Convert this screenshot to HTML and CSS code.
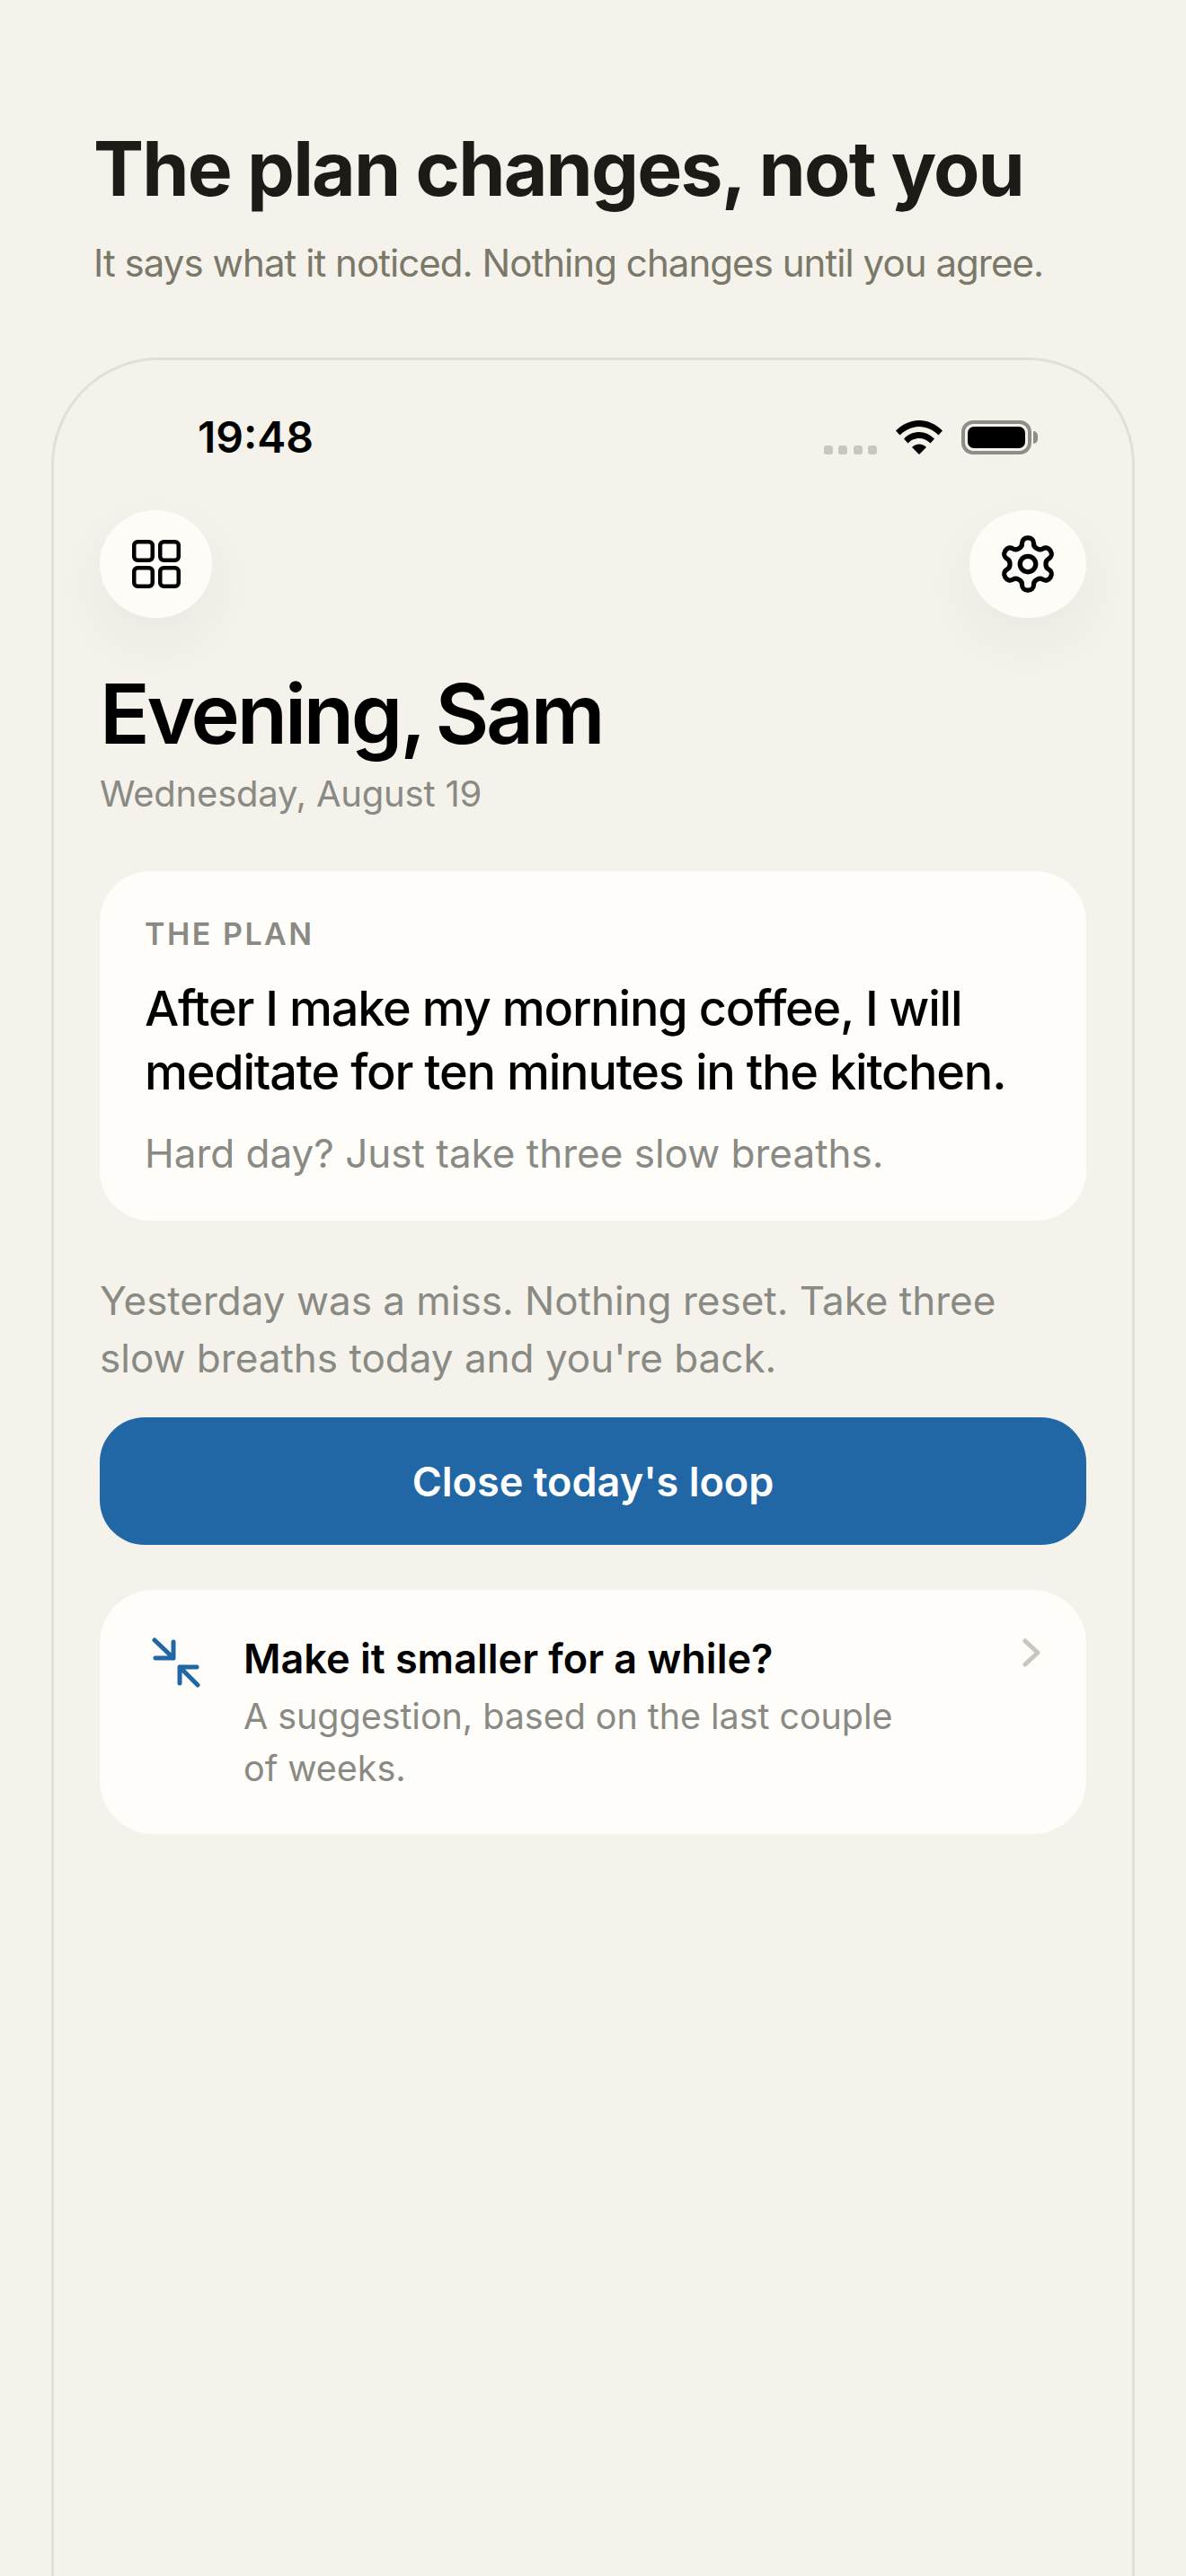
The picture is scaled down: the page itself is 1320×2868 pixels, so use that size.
FILE: index.html
```html
<!DOCTYPE html>
<html lang="en">
<head>
<meta charset="UTF-8" />
<title>The plan changes, not you</title>
<link rel="stylesheet" href="styles.css">
</head>
<body>

<header class="intro">
  <h1>The plan changes, not you</h1>
  <p>It says what it noticed. Nothing changes until you agree.</p>
</header>

<div class="phone">
  <!-- status bar -->
  <div class="status">
    <span class="time">19:48</span>
    <div class="status-icons">
      <span class="dots"><i></i><i></i><i></i><i></i></span>
      <svg class="wifi" width="52" height="38" viewBox="0 0 52 38">
        <path d="M0 11.500C7 4.500 16 0 26 0s19 4.500 26 11.500l-4.500 5C41.500 10.500 34 7 26 7S10.500 10.500 4.500 16.500z"/>
        <path d="M9 20.500C13.500 16 19.500 13 26 13s12.500 3 17 7.500l-4.500 5C35 22 30.800 20 26 20s-9 2-12.500 5.500z"/>
        <path d="M18 30c2-2 5-3.500 8-3.500s6 1.500 8 3.500l-8 8z"/>
      </svg>
      <span class="battery"><b></b></span>
    </div>
  </div>

  <div class="toolbar">
    <button class="round round-grid">
      <svg width="54" height="54" viewBox="0 0 54 54" fill="none" stroke="#000" stroke-width="4.500">
        <rect x="2.250" y="2.250" width="20.500" height="20.500" rx="4"/>
        <rect x="31.250" y="2.250" width="20.500" height="20.500" rx="4"/>
        <rect x="2.250" y="31.250" width="20.500" height="20.500" rx="4"/>
        <rect x="31.250" y="31.250" width="20.500" height="20.500" rx="4"/>
      </svg>
    </button>
    <button class="round round-gear">
      <svg width="70" height="70" viewBox="0 0 24 24" fill="none" stroke="#000" stroke-width="1.800" stroke-linecap="round" stroke-linejoin="round">
        <path d="M12.220 2h-.44a2 2 0 0 0-2 2v.18a2 2 0 0 1-1 1.730l-.43.25a2 2 0 0 1-2 0l-.15-.08a2 2 0 0 0-2.730.73l-.22.38a2 2 0 0 0 .73 2.730l.15.1a2 2 0 0 1 1 1.720v.51a2 2 0 0 1-1 1.740l-.15.09a2 2 0 0 0-.73 2.730l.22.38a2 2 0 0 0 2.730.73l.15-.08a2 2 0 0 1 2 0l.43.25a2 2 0 0 1 1 1.730V20a2 2 0 0 0 2 2h.44a2 2 0 0 0 2-2v-.18a2 2 0 0 1 1-1.730l.43-.25a2 2 0 0 1 2 0l.15.08a2 2 0 0 0 2.730-.73l.22-.39a2 2 0 0 0-.73-2.730l-.15-.08a2 2 0 0 1-1-1.740v-.5a2 2 0 0 1 1-1.740l.15-.09a2 2 0 0 0 .73-2.730l-.22-.38a2 2 0 0 0-2.730-.73l-.15.08a2 2 0 0 1-2 0l-.43-.25a2 2 0 0 1-1-1.730V4a2 2 0 0 0-2-2z"/>
        <circle cx="12" cy="12" r="3"/>
      </svg>
    </button>
  </div>

  <h2 class="greeting">Evening, Sam</h2>
  <div class="date">Wednesday, August 19</div>

  <section class="card plan">
    <div class="plan-label">THE PLAN</div>
    <div class="plan-text">After I make my morning coffee, I will meditate for ten minutes in the kitchen.</div>
    <div class="plan-hint">Hard day? Just take three slow breaths.</div>
  </section>

  <p class="note">Yesterday was a miss. Nothing reset. Take three slow breaths today and you're back.</p>

  <button class="primary">Close today's loop</button>

  <section class="card suggest">
    <svg class="suggest-icon" width="56" height="56" viewBox="0 0 56 56" fill="none" stroke="#2167a6" stroke-width="5" stroke-linecap="round" stroke-linejoin="round">
      <path d="M4 3l21 20M5 23h20V5"/>
      <path d="M52 53L32 33M51 33H32v18"/>
    </svg>
    <div class="suggest-body">
      <div class="suggest-title">Make it smaller for a while?</div>
      <div class="suggest-sub">A suggestion, based on the last couple of weeks.</div>
    </div>
    <svg class="chevron" width="20" height="32" viewBox="0 0 20 32" fill="none" stroke="#c8c6c0" stroke-width="5" stroke-linecap="round" stroke-linejoin="round">
      <path d="M3 3l14 13L3 29"/>
    </svg>
  </section>
</div>

</body>
</html>
```

FILE: styles.css
```css
* {
  box-sizing: border-box;
}
body {
  margin: 0;
  height: 2868px;
  overflow: hidden;
  background: #f4f2eb;
  font-family: Inter, "Liberation Sans", sans-serif;
  color: #000;
  display: flex;
  flex-direction: column;
}
.intro {
  padding: 140px 104px 0;
  height: 398px;
  flex: none;
}
.intro h1 {
  margin: 0;
  font-size: 84px;
  line-height: 96px;
  font-weight: 700;
  letter-spacing: -1.82px;
  color: #1c1b18;
}
.intro p {
  margin: 29px 0 0;
  font-size: 42px;
  line-height: 56px;
  font-weight: 400;
  letter-spacing: -0.95px;
  color: #7a7868;
}

.phone {
  flex: 1;
  margin: 0 57px;
  padding: 0 51px;
  border: 3px solid #e1dfd7;
  border-bottom: none;
  border-radius: 120px 120px 0 0;
}
.status {
  display: flex;
  justify-content: space-between;
  align-items: center;
  height: 100px;
  padding: 0 61px 0 109px;
  margin-top: 36px;
}
.time {
  font-size: 48px;
  font-weight: 600;
  line-height: 58px;
}
.status-icons {
  display: flex;
  align-items: flex-end;
  gap: 21px;
}
.dots {
  display: flex;
  gap: 6.500px;
}
.dots i {
  width: 10px;
  height: 10px;
  border-radius: 3px;
  background: #c8c6c0;
}
.battery {
  position: relative;
  width: 78px;
  height: 38px;
  border: 4px solid #8f8d87;
  border-radius: 13px;
  padding: 3px;
  display: block;
}
.battery b {
  display: block;
  height: 100%;
  background: #000;
  border-radius: 7px;
}
.battery::after {
  content: "";
  position: absolute;
  right: -11px;
  top: 8px;
  width: 5px;
  height: 14px;
  background: #8f8d87;
  border-radius: 0 5px 5px 0;
}

.toolbar {
  display: flex;
  justify-content: space-between;
  margin-top: 31px;
}
.round {
  height: 120px;
  border: none;
  padding: 0;
  border-radius: 50%;
  background: #fefcf6;
  box-shadow: 0 24px 60px rgba(60, 50, 30, 0.05);
  display: flex;
  align-items: center;
  justify-content: center;
}
.round-grid {
  width: 125px;
}
.round-gear {
  width: 130px;
}

.greeting {
  margin: 52px 0 0;
  font-size: 92px;
  line-height: 110px;
  font-weight: 600;
  letter-spacing: -3.2px;
  word-spacing: -5px;
}
.date {
  margin-top: 9px;
  font-size: 40px;
  line-height: 50px;
  letter-spacing: -0.2px;
  color: #8a8a85;
}

.card {
  background: #fefdf9;
  border-radius: 56px;
}
.plan {
  margin-top: 61px;
  height: 389px;
  padding: 50px 50px 0;
}
.plan-label {
  font-size: 34px;
  line-height: 40px;
  font-weight: 600;
  letter-spacing: 2.5px;
  color: #8a8a85;
}
.plan-text {
  margin-top: 27px;
  font-size: 54px;
  line-height: 71px;
  font-weight: 500;
  letter-spacing: -1.2px;
}
.plan-hint {
  margin-top: 27px;
  font-size: 44px;
  line-height: 56px;
  color: #8a8a85;
}
.note {
  margin: 57px 0 0;
  font-size: 44px;
  line-height: 64px;
  color: #8a8a85;
}
.primary {
  display: block;
  width: 100%;
  height: 142px;
  margin-top: 34px;
  border: none;
  border-radius: 50px;
  background: #2167a6;
  color: #fff;
  font-family: inherit;
  font-size: 45px;
  font-weight: 600;
}
.suggest {
  margin-top: 50px;
  height: 272px;
  border-radius: 60px;
  padding: 48px 51px 0 57px;
  display: flex;
  align-items: flex-start;
}
.suggest-icon {
  flex: none;
  margin-top: 5px;
}
.suggest-body {
  margin-left: 47px;
  width: 760px;
}
.suggest-title {
  font-size: 45px;
  line-height: 58px;
  font-weight: 600;
}
.suggest-sub {
  margin-top: 6px;
  font-size: 39.5px;
  line-height: 58px;
  letter-spacing: -0.05px;
  color: #8a8a85;
}
.chevron {
  flex: none;
  margin: 6px 0 0 auto;
}
```
